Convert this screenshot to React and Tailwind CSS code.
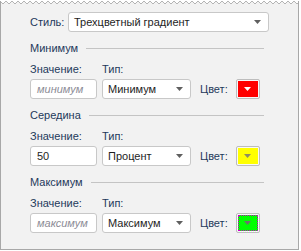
import React from "react";

const FONT = { fontFamily: '"Liberation Sans", Arial, sans-serif' };

function Caret({ color = "#5f5f5f" }) {
  return (
    <svg width="7" height="4" viewBox="0 0 7 4" className="shrink-0">
      <path d="M0 0h7L3.5 4z" fill={color} />
    </svg>
  );
}

function Zigzag() {
  const pts = [];
  for (let x = 0; x <= 300; x += 3) pts.push(`${x},${(x / 3) % 2 === 0 ? 1 : 4}`);
  return (
    <svg width="299" height="6" className="block">
      <polygon points={`0,6 ${pts.join(" ")} 299,6`} fill="#f2f2f2" />
      <polyline points={pts.join(" ")} fill="none" stroke="#b4b4b4" strokeWidth="1" />
      <line x1="0.5" y1="1" x2="0.5" y2="6" stroke="#a8a8a8" />
      <line x1="298.5" y1="1" x2="298.5" y2="6" stroke="#a8a8a8" />
    </svg>
  );
}

function Select({ value, className }) {
  return (
    <div className={`flex h-[20px] items-center justify-between rounded-[3px] border border-[#c8c8c8] bg-white pl-[5px] pr-[7px] ${className}`}>
      <span className="text-[11px] leading-none text-[#1e1e1e]">{value}</span>
      <Caret />
    </div>
  );
}

function Swatch({ fill, caret, focused }) {
  return (
    <div className="flex h-[20px] w-[24px] items-center justify-center rounded-[2px] border border-[#bdbdbd] bg-[#f8f8f8] p-[1px]">
      <div
        className={`flex h-full w-full items-center justify-center ${focused ? "outline-1 outline-dotted outline-[#c800c8] -outline-offset-1" : ""}`}
        style={{ background: fill }}
      >
        <Caret color={caret} />
      </div>
    </div>
  );
}

function Section({ title, value, placeholder, type, fill, caret, focused }) {
  return (
    <div className="flex flex-col">
      <div className="flex h-[14px] items-center gap-[8px] pr-[5px]">
        <span className="text-[11px] text-[#1e395b]">{title}</span>
        <div className="h-px flex-1 bg-[#c4c4c4]" />
      </div>
      <div className="mt-[7px] flex h-[14px] items-center text-[11px] text-[#1e395b]">
        <span className="w-[72px]">Значение:</span>
        <span>Тип:</span>
      </div>
      <div className="mt-[3px] flex h-[20px] items-center">
        <div className="flex h-[20px] w-[67px] items-center rounded-[3px] border border-[#c8c8c8] bg-white pl-[6px]">
          {value ? (
            <span className="text-[11px] leading-none text-[#1e1e1e]">{value}</span>
          ) : (
            <span className="text-[11px] italic leading-none text-[#8c8c96]">{placeholder}</span>
          )}
        </div>
        <Select value={type} className="ml-[5px] w-[89px]" />
        <span className="ml-[9px] mr-[8px] text-[11px] text-[#1e395b]">Цвет:</span>
        <Swatch fill={fill} caret={caret} focused={focused} />
      </div>
    </div>
  );
}

export default function App() {
  return (
    <div className="h-[251px] w-[301px] bg-white" style={FONT}>
      <Zigzag />
      <div className="h-[244px] w-[299px] border-x border-b border-[#a8a8a8] bg-[#f2f2f2] pl-[29px] pr-[29px] pt-[6px]">
        <div className="flex h-[20px] items-center">
          <span className="w-[38px] text-[11px] text-[#1e395b]">Стиль:</span>
          <Select value="Трехцветный градиент" className="flex-1" />
        </div>
        <div className="mt-[9px] flex flex-col gap-[9px]">
          <Section title="Минимум" placeholder="минимум" type="Минимум" fill="#ff0000" caret="#ffffff" />
          <Section title="Середина" value="50" type="Процент" fill="#ffff00" caret="#8c8c64" />
          <Section title="Максимум" placeholder="максимум" type="Максимум" fill="#00ff00" caret="#6e6e6e" focused />
        </div>
      </div>
    </div>
  );
}
